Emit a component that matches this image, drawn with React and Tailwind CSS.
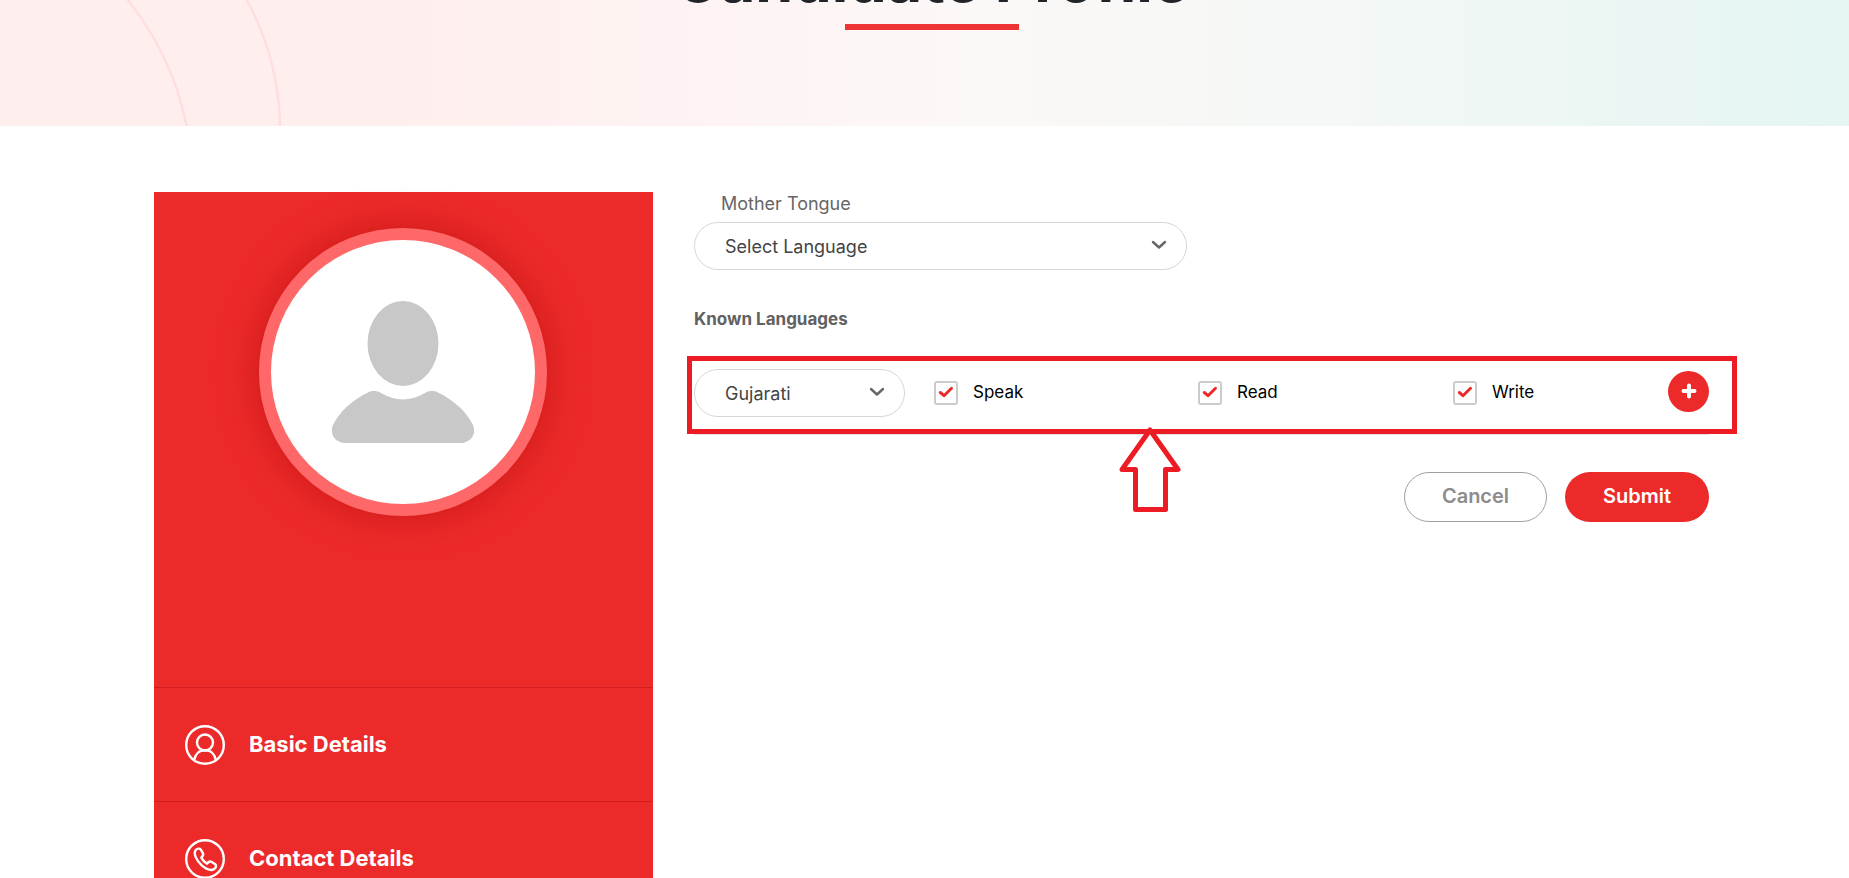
import React, { useState } from 'react';

const UserIcon = () => (
    <svg viewBox="0 0 40 40" className="size-10 shrink-0" fill="none" stroke="currentColor" strokeWidth="2.4" aria-hidden="true">
        <circle cx="20" cy="20" r="18.8" />
        <circle cx="20" cy="17.5" r="8" />
        <path d="M9.2 35.2C10 29.5 14 25.3 20 25.3S30 29.5 30.8 35.2" />
    </svg>
);

const PhoneIcon = () => (
    <svg viewBox="0 0 40 40" className="size-10 shrink-0" fill="none" stroke="currentColor" strokeWidth="2.4" strokeLinejoin="round" aria-hidden="true">
        <circle cx="20" cy="20" r="18.8" />
        <path d="M10.6 11.2C12 9.4 14.6 9 15.8 10.6L17.9 14.2C18.8 15.9 17.4 17.6 16.3 18.6C17.6 21.2 19.4 23.2 22 24.6C23.2 23.2 25 22 26.8 23L30.2 25.2C31.8 26.4 30.9 28.8 29.2 30C26.6 31.8 22.4 31 17 26.6C11.4 21.6 8.2 14.8 10.6 11.2Z" />
    </svg>
);

const menuItems = [
    { label: 'Basic Details', Icon: UserIcon },
    { label: 'Contact Details', Icon: PhoneIcon },
];

const LanguageSelect = ({ id, label, value, onChange, options }) => (
    <div className="relative">
        <select
            id={id}
            aria-label={label}
            value={value}
            onChange={(e) => onChange(e.target.value)}
            className="block w-full h-12 appearance-none rounded-full border border-[#d6d6d6] bg-white pl-[30px] pr-12 text-[18px] text-[#444444] outline-none"
        >
            {options.map(option => (
                <option key={option}>{option}</option>
            ))}
        </select>
        <svg viewBox="0 0 16 10" className="pointer-events-none absolute right-5 top-[18px] w-4 h-[10px]" fill="none" stroke="#666666" strokeWidth="2.4" strokeLinecap="round" strokeLinejoin="round" aria-hidden="true">
            <path d="M2 2L8 7.5L14 2" />
        </svg>
    </div>
);

const SkillCheckbox = ({ label }) => (
    <label className="flex items-center gap-[15px] text-[17px] text-black">
        <span className="relative">
            <input type="checkbox" defaultChecked className="peer block size-6 appearance-none rounded-[3px] border-2 border-[#cccccc] bg-white" />
            <svg viewBox="0 0 24 24" className="pointer-events-none absolute inset-0 hidden size-6 peer-checked:block" fill="none" stroke="#ed2a2a" strokeWidth="3" strokeLinecap="round" strokeLinejoin="round" aria-hidden="true">
                <path d="M6.3 11.5L10 14.7L17.5 7.3" />
            </svg>
        </span>
        {label}
    </label>
);

const PageBanner = () => (
    <header className="relative flex h-[126px] flex-col items-center overflow-hidden bg-[linear-gradient(90deg,#ffeeee_0%,#ffeeee_22%,#fcf8f7_52%,#f5f8f6_70%,#e4f5f2_100%)] pl-[15px]">
        <svg viewBox="0 0 300 126" className="absolute left-0 top-0 h-[126px] w-[300px]" fill="none" stroke="#ffdede" strokeWidth="2.4" aria-hidden="true">
            <circle cx="-98" cy="182" r="290" />
            <circle cx="9" cy="130" r="271" />
        </svg>
        <h1 className="-mt-14 pb-2 text-[61px] leading-[72px] font-bold whitespace-nowrap text-[#212529]">Candidate Profile</h1>
        <div className="h-[6px] w-[174px] shrink-0 bg-[#ed3535]" />
    </header>
);

const Sidebar = () => (
    <aside className="bg-[#ed2a2a] text-white">
        <div className="flex h-[495px] justify-center pr-[2px] pt-9">
            <div className="size-72 rounded-full border-12 border-[#ff6868] bg-white shadow-[0_0_40px_rgba(160,0,0,0.45)]">
                <svg viewBox="0 0 264 264" className="size-full" fill="#c8c8c8" role="img" aria-label="Profile photo">
                    <ellipse cx="132" cy="103.500" rx="35.500" ry="42.500" />
                    <path d="M97 152.500C101 150.500 106 150.500 110 153C124 161.500 140 161.500 154 153C158 150.500 163 150.500 167 152.500C182 159.500 196 172 202 185C206 195 199 203 189 203H75C65 203 58 195 62 185C68 172 82 159.500 97 152.500Z" />
                </svg>
            </div>
        </div>
        <nav>
            {menuItems.map(({ label, Icon }) => (
                <a key={label} href="#" className="flex h-[114px] items-center gap-6 border-t border-[#d41c20] pl-[31px] text-[22px] font-bold">
                    <Icon />
                    {label}
                </a>
            ))}
        </nav>
    </aside>
);

const LanguageForm = () => {
    const [motherTongue, setMotherTongue] = useState('Select Language');
    const [language, setLanguage] = useState('Gujarati');

    return (
        <form onSubmit={(e) => e.preventDefault()}>
            <div className="w-[493px] max-w-full">
                <label htmlFor="mother-tongue" className="block pl-[27px] pb-[6px] text-[18px] leading-6 text-[#666666]">
                    Mother Tongue
                </label>
                <LanguageSelect
                    id="mother-tongue"
                    value={motherTongue}
                    onChange={setMotherTongue}
                    options={['Select Language', 'Gujarati', 'Hindi', 'English']}
                />
            </div>

            <h2 className="pt-[37px] text-[17px] leading-6 font-bold text-[#616161]">Known Languages</h2>

            <div className="relative mt-[38px] grid grid-cols-[240fr_264fr_255fr_215fr_41px] items-center border-b border-[#dee2e6] pb-[17px]">
                <div className="pr-[29px]">
                    <LanguageSelect
                        id="known-language"
                        label="Known language"
                        value={language}
                        onChange={setLanguage}
                        options={['Gujarati', 'Hindi', 'English']}
                    />
                </div>
                <SkillCheckbox label="Speak" />
                <SkillCheckbox label="Read" />
                <SkillCheckbox label="Write" />
                <button type="button" aria-label="Add language" className="mb-1 flex size-[41px] items-center justify-center rounded-full bg-[#ed2a2a]">
                    <svg viewBox="0 0 16 16" className="size-4" stroke="#ffffff" strokeWidth="4" strokeLinecap="round" aria-hidden="true">
                        <path d="M8 2.5V13.5M2.5 8H13.5" />
                    </svg>
                </button>

                {/* Callout box and arrow around the row */}
                <div className="pointer-events-none absolute -left-[7px] -right-7 -top-[13px] h-[78px] border-5 border-[#ed1c24]">
                    <svg viewBox="0 0 62 86" className="absolute left-[427px] top-[66px] h-[86px] w-[62px]" fill="none" stroke="#ed1c24" strokeWidth="5" strokeLinejoin="round" aria-hidden="true">
                        <path d="M31 3L59 42.500H46.500V82.500H16.500V42.500H3Z" />
                    </svg>
                </div>
            </div>

            <div className="flex justify-end gap-[18px] pt-[37px]">
                <button type="button" className="h-[50px] w-[143px] rounded-full border border-[#a0a0a0] bg-white pb-[2px] text-[20px] font-semibold text-[#8c8c8c]">
                    Cancel
                </button>
                <button type="submit" className="h-[50px] w-36 rounded-full bg-[#ed2a2a] pb-[2px] text-[20px] font-semibold text-white">
                    Submit
                </button>
            </div>
        </form>
    );
};

const App = () => {
    return (
        <div className="h-screen overflow-hidden bg-white font-[Inter,sans-serif]">
            <PageBanner />
            <main className="grid grid-cols-[499fr_1015fr] gap-[41px] pl-[154px] pr-[140px] pt-[66px]">
                <Sidebar />
                <LanguageForm />
            </main>
        </div>
    );
};

export default App;
